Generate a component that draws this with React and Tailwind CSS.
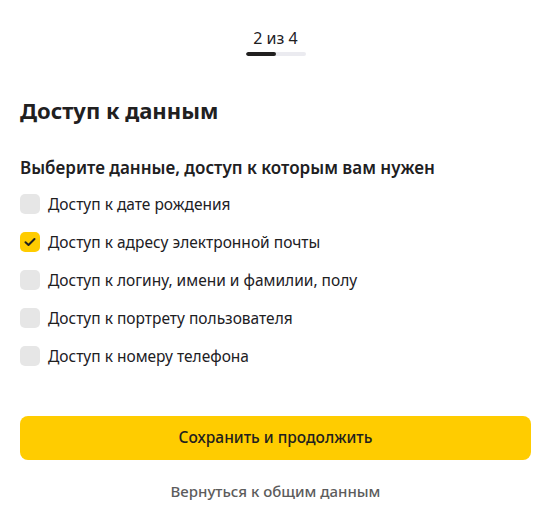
import React, { useState } from 'react';

const items = [
  { label: 'Доступ к дате рождения', checked: false },
  { label: 'Доступ к адресу электронной почты', checked: true },
  { label: 'Доступ к логину, имени и фамилии, полу', checked: false },
  { label: 'Доступ к портрету пользователя', checked: false },
  { label: 'Доступ к номеру телефона', checked: false },
];

export default function App() {
  const [state, setState] = useState(items.map((i) => i.checked));

  const toggle = (idx) => setState((s) => s.map((v, i) => (i === idx ? !v : v)));

  return (
    <div className="min-h-screen bg-white pl-5 pr-[18px] text-[#21201f] font-['Noto_Sans',sans-serif]">
      <div className="flex flex-col items-center pt-7">
        <div className="text-base leading-5">2 из 4</div>
        <div className="mt-1 flex h-1 w-[60px] overflow-hidden rounded-full bg-[#ebebf0]">
          <div className="h-full w-[30px] rounded-full bg-[#21201f]" />
        </div>
      </div>

      <h1 className="mt-[40px] text-[22px] leading-7 font-bold">Доступ к данным</h1>

      <h2 className="mt-[32px] text-[17px] leading-6 font-semibold">Выберите данные, доступ к которым вам нужен</h2>

      <div className="mt-[14px] flex flex-col gap-[18px]">
        {items.map((item, idx) => (
          <label key={item.label} className="flex cursor-pointer items-center gap-2 text-[15.5px] leading-5" onClick={() => toggle(idx)}>
            <span className={`flex h-5 w-5 shrink-0 items-center justify-center rounded-[5px] ${state[idx] ? 'bg-[#ffcc00]' : 'bg-[#e6e6e6]'}`}>
              {state[idx] && (
                <svg width="12" height="10" viewBox="0 0 12 10" fill="none">
                  <path d="M1.5 5.2 4.5 8 10.5 2" stroke="#21201f" strokeWidth="2" strokeLinecap="round" strokeLinejoin="round" />
                </svg>
              )}
            </span>
            <span>{item.label}</span>
          </label>
        ))}
      </div>

      <button className="mt-[50px] h-11 w-full rounded-lg bg-[#ffcc00] text-[15.5px] font-medium text-[#21201f]">
        Сохранить и продолжить
      </button>

      <div className="mt-[20px] text-center text-[15px] font-medium text-[#5c5c5c]">Вернуться к общим данным</div>
    </div>
  );
}
